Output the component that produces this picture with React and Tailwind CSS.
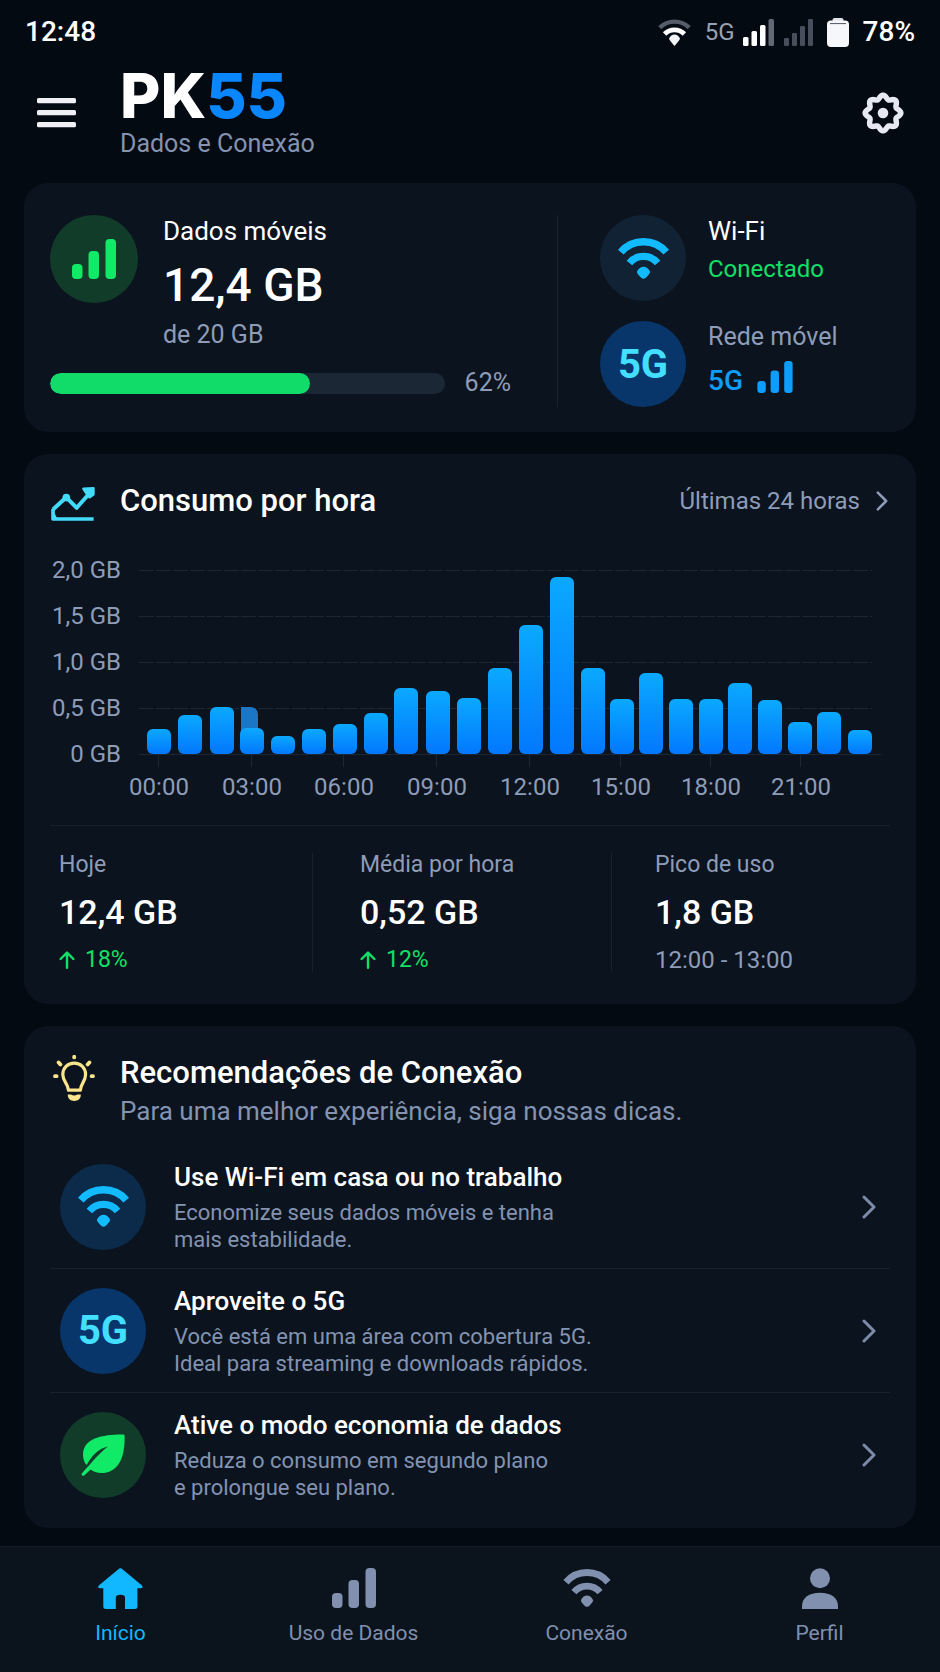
import { useState } from 'react';

const bars = [
  { x: 97, h: 25 },
  { x: 128, h: 39 },
  { x: 160, h: 47 },
  { x: 190, h: 26 },
  { x: 221, h: 18 },
  { x: 252, h: 25 },
  { x: 283, h: 30 },
  { x: 314, h: 41 },
  { x: 344, h: 66 },
  { x: 376, h: 63 },
  { x: 407, h: 56 },
  { x: 438, h: 86 },
  { x: 469, h: 129 },
  { x: 500, h: 177 },
  { x: 531, h: 86 },
  { x: 560, h: 55 },
  { x: 589, h: 81 },
  { x: 619, h: 55 },
  { x: 649, h: 55 },
  { x: 678, h: 71 },
  { x: 708, h: 54 },
  { x: 738, h: 32 },
  { x: 767, h: 42 },
  { x: 798, h: 24 },
];

const yTicks = [
  { label: '2,0 GB', y: 25 },
  { label: '1,5 GB', y: 71 },
  { label: '1,0 GB', y: 117 },
  { label: '0,5 GB', y: 163 },
  { label: '0 GB', y: 209 },
];

const xTicks = [
  { label: '00:00', x: 109 },
  { label: '03:00', x: 202 },
  { label: '06:00', x: 294 },
  { label: '09:00', x: 387 },
  { label: '12:00', x: 480 },
  { label: '15:00', x: 571 },
  { label: '18:00', x: 661 },
  { label: '21:00', x: 751 },
];

// closed wavy ring with 8 lobes
const gearPath =
  Array.from({ length: 96 }, (_, i) => {
    const a = (i / 96) * Math.PI * 2;
    const r = 16 + 1.9 * Math.cos(8 * a);
    const x = (21 + r * Math.cos(a)).toFixed(2);
    const y = (21 + r * Math.sin(a)).toFixed(2);
    return `${i === 0 ? 'M' : 'L'}${x} ${y}`;
  }).join('') + 'Z';

function WifiIcon({ className }) {
  return (
    <svg viewBox="0 0 51 41" className={className} fill="none" stroke="currentColor" aria-hidden="true">
      <path d="M2.8 14.2A30 30 0 0 1 48.2 14.2" strokeWidth="7.4" />
      <path d="M11.4 25A18.4 18.4 0 0 1 39.6 25" strokeWidth="7.2" />
      <path
        d="M19 33.5C20.5 30.2 23 28.7 25.5 28.7S30.5 30.2 32 33.5C32.3 35 31 36.3 27.5 40.1Q25.5 41.6 23.5 40.1C20 36.3 18.7 35 19 33.5Z"
        fill="currentColor"
        stroke="none"
      />
    </svg>
  );
}

function SignalIcon({ className }) {
  return (
    <svg viewBox="0 0 44 40" className={className} fill="currentColor" aria-hidden="true">
      <rect x="0" y="25" width="10.5" height="15" rx="4" />
      <rect x="16.5" y="12" width="10.5" height="28" rx="4" />
      <rect x="33.5" y="0" width="10.5" height="40" rx="4" />
    </svg>
  );
}

function LeafIcon({ className }) {
  return (
    <svg viewBox="0 0 44 42" className={className} fill="currentColor" aria-hidden="true">
      <path d="M42.6 .5C28 .6 2 1.5 2 21C2 25 3.5 29 5.7 31C11 21 18 14.5 27 12.5C19 18.5 12 27 .8 39.6C0 41 1.8 42.6 3.2 41.4L9.6 35.6C12.6 38 16 39 20 39C37 39 44.2 24 43.6 1.6Q43.5 .5 42.6 .5Z" />
    </svg>
  );
}

function ChevronIcon({ className }) {
  return (
    <svg viewBox="0 0 14 24" className={className} fill="none" stroke="currentColor" strokeWidth="3" strokeLinecap="round" strokeLinejoin="round" aria-hidden="true">
      <path d="M2 2L12 12L2 22" />
    </svg>
  );
}

function HomeIcon({ className }) {
  return (
    <svg viewBox="0 0 45 41" className={className} fill="currentColor" aria-hidden="true">
      <path d="M21.3 .6Q22.4 -.3 23.5 .6L44 17.6Q45.4 19.9 43 20.3H39.4V38.5Q39.4 41 36.8 41H27V29.5Q27 26.7 22.4 26.7T17.8 29.5V41H8Q5.3 41 5.3 38.5V20.3H1.8Q-.8 19.9 .8 17.6Z" />
    </svg>
  );
}

function UserIcon({ className }) {
  return (
    <svg viewBox="0 0 36 41" className={className} fill="currentColor" aria-hidden="true">
      <circle cx="18" cy="10.2" r="10" />
      <path d="M0 41V38.5C0 29.5 7 24.8 18 24.8S36 29.5 36 38.5V41Z" />
    </svg>
  );
}

function TrendIcon({ className }) {
  return (
    <svg viewBox="0 0 44 34" className={className} fill="none" stroke="currentColor" strokeLinejoin="round" aria-hidden="true">
      <path d="M2 22.5L15.3 10.3L25.7 20.8L37 8" strokeWidth="4" />
      <path d="M2 22V32H42.6" strokeWidth="3.6" />
      <path d="M3 25L6.5 32H3Z" fill="currentColor" stroke="none" />
      <path d="M32.5 1.8L42.4 1.4L42.4 7.5L38.6 10.2L36 7Z" fill="currentColor" strokeWidth="2.6" />
      <circle cx="15.3" cy="10.6" r="3.8" fill="currentColor" stroke="none" />
    </svg>
  );
}

function BulbIcon({ className }) {
  return (
    <svg viewBox="0 0 42 46" className={className} fill="none" stroke="currentColor" strokeLinecap="round" strokeLinejoin="round" aria-hidden="true">
      <path d="M15.4 35.2C15.4 29 9.8 26.6 9.8 19.6C9.8 13 14.6 8.2 21.2 8.2S32.6 13 32.6 19.6C32.6 26.6 27.4 29 27.4 35.2Z" strokeWidth="3.2" />
      <path d="M14.8 39.6H18Q21.2 41.6 24.4 39.6H27.8C28 43.6 25.2 46 21.3 46S14.6 43.6 14.8 39.6Z" fill="currentColor" stroke="none" />
      <path d="M21.2 1.8V2.4M2 21.2H3.6M38.6 21.2H40M5.6 7.4L7.4 9.4M36.4 7.4L34.6 9.4" strokeWidth="3.8" />
    </svg>
  );
}

function ArrowUpIcon({ className }) {
  return (
    <svg viewBox="0 0 16 18" className={className} fill="none" stroke="currentColor" strokeWidth="2.4" strokeLinecap="round" strokeLinejoin="round" aria-hidden="true">
      <path d="M8 16.8V1.6M1.6 8L8 1.6L14.4 8" />
    </svg>
  );
}

function StatusBar() {
  return (
    <div className="flex h-[62px] items-center justify-between px-[25px] pt-0.5 text-[28px] font-medium text-white">
      <span>12:48</span>
      <div className="flex items-center">
        <svg viewBox="0 0 33 27" className="h-[27px] w-[33px]" fill="none" aria-hidden="true">
          <path d="M1.8 8.6A21 21 0 0 1 31.2 8.6" stroke="#565d69" strokeWidth="4.4" />
          <path d="M6.6 15A14 14 0 0 1 26.4 15" stroke="#fff" strokeWidth="4.8" />
          <path d="M11 19.6Q13 15.6 16.5 15.6T22 19.6Q22 21 16.5 27Q11 21 11 19.6Z" fill="#f1f3f6" />
        </svg>
        <span className="ml-3.5 text-2xl font-normal text-[#9aa1b1]">5G</span>
        <svg viewBox="0 0 31 27" className="ml-2 h-[27px] w-[31px]" fill="#fff" aria-hidden="true">
          <rect x="0" y="18" width="5.5" height="9" rx="1.5" />
          <rect x="8.5" y="12" width="5.5" height="15" rx="1.5" />
          <rect x="17" y="6" width="5.5" height="21" rx="1.5" />
          <rect x="25.5" y="0" width="5.5" height="27" rx="1.5" fill="#636974" />
        </svg>
        <svg viewBox="0 0 29 27" className="ml-2.5 h-[27px] w-[29px]" fill="#484e5b" aria-hidden="true">
          <rect x="0" y="19" width="5" height="8" rx="1" />
          <rect x="8" y="14" width="5" height="13" rx="1" />
          <rect x="16" y="7" width="5" height="20" rx="1" />
          <rect x="24" y="0" width="5" height="27" rx="1" />
        </svg>
        <svg viewBox="0 0 22 29" className="ml-3.5 h-[29px] w-[22px]" aria-hidden="true">
          <rect x="5.5" y="0" width="11" height="6" rx="2" fill="#dfe3ea" />
          <rect x="0" y="2.5" width="22" height="26.5" rx="4" fill="#f6f7fb" />
          <path d="M3 5.6H19" stroke="#4d5563" strokeWidth="1" />
        </svg>
        <span className="ml-3.5">78%</span>
      </div>
    </div>
  );
}

function Header() {
  return (
    <header className="flex items-start px-9 pt-1.5 pb-[23px]">
      <button type="button" aria-label="Abrir menu" className="flex h-[90px] items-center">
        <svg viewBox="0 0 40 30" className="h-[30px] w-10" fill="#eef0f5" aria-hidden="true">
          <rect x="1" y="0" width="39" height="5.2" rx="1.5" />
          <rect x="1" y="12" width="39" height="5.2" rx="1.5" />
          <rect x="1" y="24" width="39" height="5.2" rx="1.5" />
        </svg>
      </button>
      <div className="ml-11 flex-1">
        <h1 className="font-[Inter,sans-serif] text-[62px] leading-[56px] font-extrabold text-white">
          PK<span className="text-[#0a86ff]">55</span>
        </h1>
        <p className="mt-1 text-[25px] leading-8 text-[#8393b1]">Dados e Conexão</p>
      </div>
      <button type="button" aria-label="Configurações" className="flex h-[90px] items-center">
        <svg viewBox="0 0 42 42" className="size-[42px]" aria-hidden="true">
          <path d={gearPath} fill="none" stroke="#e6e9f2" strokeWidth="5.4" strokeLinejoin="round" />
          <circle cx="21" cy="21" r="5.3" fill="#e6e9f2" />
        </svg>
      </button>
    </header>
  );
}

function UsageCard() {
  const [percent] = useState(62);

  return (
    <section className="grid grid-cols-[1fr_333px] rounded-3xl bg-[#0b131e] px-[26px] pt-8 pb-[25px]">
      <div className="pr-[46px]">
        <div className="flex gap-[25px]">
          <div className="flex size-[88px] shrink-0 items-center justify-center rounded-full bg-[#113c29] text-[#10ea67]">
            <SignalIcon className="h-10 w-11" />
          </div>
          <div>
            <h2 className="text-[26px] leading-8 text-white">Dados móveis</h2>
            <p className="mt-2.5 text-[46px] leading-[56px] font-medium text-white">12,4 GB</p>
            <p className="mt-1.5 text-[25px] leading-8">de 20 GB</p>
          </div>
        </div>
        <div className="mt-4 flex items-center gap-5">
          <div role="progressbar" aria-label="Dados usados" aria-valuenow={percent} aria-valuemin="0" aria-valuemax="100" className="h-[21px] flex-1 overflow-hidden rounded-full bg-[#1c2736]">
            <div className="h-full w-[66%] rounded-full bg-[#11dc69]" />
          </div>
          <span className="text-[25px] leading-8">{percent}%</span>
        </div>
      </div>
      <div className="flex flex-col gap-5 border-l border-[#1a232f] pl-[42px]">
        <div className="flex gap-[22px]">
          <div className="flex size-[86px] items-center justify-center rounded-full bg-[#102233] text-[#12bbff]">
            <WifiIcon className="h-[41px] w-[51px]" />
          </div>
          <div>
            <h2 className="text-[26px] leading-8 text-white">Wi-Fi</h2>
            <p className="mt-1.5 text-2xl leading-8 text-[#12e066]">Conectado</p>
          </div>
        </div>
        <div className="flex gap-[22px]">
          <div className="flex size-[86px] items-center justify-center rounded-full bg-[#08366a] pt-0.5 text-[40px] font-bold text-[#42dfff]">
            5G
          </div>
          <div>
            <h2 className="text-[25px] leading-8">Rede móvel</h2>
            <p className="mt-3 flex gap-3.5 text-[28px] leading-8 font-medium text-[#0f9dfb]">
              5G
              <SignalIcon className="-mt-1 h-8 w-9" />
            </p>
          </div>
        </div>
      </div>
    </section>
  );
}

function HourlyChart() {
  return (
    <svg viewBox="0 0 840 260" className="mt-6 w-full" role="img" aria-label="Consumo por hora nas últimas 24 horas">
      <defs>
        <linearGradient id="bar" x1="0" y1="0" x2="0" y2="1">
          <stop offset="0" stopColor="#0ba9ff" />
          <stop offset="1" stopColor="#0278fd" />
        </linearGradient>
      </defs>
      {yTicks.map((tick) => (
        <g key={tick.label}>
          <text x="71" y={tick.y + 8} textAnchor="end" fontSize="24" fill="#8e9cb8">
            {tick.label}
          </text>
          <path
            d={tick.y === 209 ? 'M89 209.5H831' : `M89 ${tick.y + 0.5}H822`}
            stroke="#1c2733"
            strokeDasharray={tick.y === 209 ? undefined : '15 2'}
          />
        </g>
      ))}
      {xTicks.map((tick) => (
        <g key={tick.label}>
          <path d={`M${tick.x - 0.5} 210V222`} stroke="#1c2733" />
          <text x={tick.x} y="250" textAnchor="middle" fontSize="24" fill="#8e9cb8">
            {tick.label}
          </text>
        </g>
      ))}
      <path d="M191 162H201Q208 163 208 170V190H191Z" fill="#1c76c6" />
      {bars.map((bar) => (
        <rect key={bar.x} x={bar.x} y={209 - bar.h} width="24" height={bar.h} rx="6" fill="url(#bar)" />
      ))}
    </svg>
  );
}

function ConsumptionCard() {
  return (
    <section className="rounded-3xl bg-[#0b131e] px-[26px] pt-[27px] pb-8">
      <div className="flex items-center justify-between">
        <div className="flex items-center">
          <TrendIcon className="mt-1.5 ml-px h-[34px] w-11 text-[#42dcfa]" />
          <h2 className="ml-[25px] text-[31px] leading-10 font-medium text-white">Consumo por hora</h2>
        </div>
        <button type="button" className="mr-0.5 flex items-center gap-4 text-2xl">
          Últimas 24 horas
          <ChevronIcon className="h-5 w-3" />
        </button>
      </div>
      <HourlyChart />
      <div className="mt-5 grid grid-cols-[262fr_299fr_279fr] border-t border-[#18212d] pt-[27px] text-[23px] leading-6">
        <div className="pl-[9px]">
          <h3>Hoje</h3>
          <p className="mt-[15px] text-[34px] leading-10 font-medium text-white">12,4 GB</p>
          <p className="mt-4 flex items-center gap-2.5 text-[#12e066]">
            <ArrowUpIcon className="h-[18px] w-4" />
            18%
          </p>
        </div>
        <div className="border-l border-[#18212d] pl-[47px]">
          <h3>Média por hora</h3>
          <p className="mt-[15px] text-[34px] leading-10 font-medium text-white">0,52 GB</p>
          <p className="mt-4 flex items-center gap-2.5 text-[#12e066]">
            <ArrowUpIcon className="h-[18px] w-4" />
            12%
          </p>
        </div>
        <div className="border-l border-[#18212d] pl-[43px]">
          <h3>Pico de uso</h3>
          <p className="mt-[15px] text-[34px] leading-10 font-medium text-white">1,8 GB</p>
          <p className="mt-4 text-2xl leading-6">12:00 - 13:00</p>
        </div>
      </div>
    </section>
  );
}

const tips = [
  {
    id: 1,
    title: 'Use Wi-Fi em casa ou no trabalho',
    lines: ['Economize seus dados móveis e tenha', 'mais estabilidade.'],
    badge: 'bg-[#0c2b4a] text-[#12bbff]',
    icon: <WifiIcon className="h-[41px] w-[51px]" />,
  },
  {
    id: 2,
    title: 'Aproveite o 5G',
    lines: ['Você está em uma área com cobertura 5G.', 'Ideal para streaming e downloads rápidos.'],
    badge: 'bg-[#08366a] text-[#42dfff]',
    icon: '5G',
  },
  {
    id: 3,
    title: 'Ative o modo economia de dados',
    lines: ['Reduza o consumo em segundo plano', 'e prolongue seu plano.'],
    badge: 'bg-[#113c29] text-[#10ea67]',
    icon: <LeafIcon className="h-[42px] w-11" />,
  },
];

function TipsCard() {
  return (
    <section className="rounded-3xl bg-[#0b131e] px-[26px] pt-[27px] pb-3">
      <div className="flex items-start">
        <BulbIcon className="mt-0.5 ml-[3px] h-[46px] w-[42px] text-[#fbe58c]" />
        <div className="ml-[25px]">
          <h2 className="text-[31px] leading-10 font-medium text-white">Recomendações de Conexão</h2>
          <p className="mt-0.5 text-[26px] leading-8 text-[#8393b1]">Para uma melhor experiência, siga nossas dicas.</p>
        </div>
      </div>
      <ul className="mt-[18px] divide-y divide-[#18212d]">
        {tips.map((tip) => (
          <li key={tip.id}>
            <a href="#" className="flex h-[123px] items-center pr-3.5 pl-2.5">
              <span className={`flex size-[86px] shrink-0 items-center justify-center rounded-full text-[40px] font-bold ${tip.badge}`}>
                {tip.icon}
              </span>
              <span className="ml-7 flex-1">
                <span className="block text-[26px] leading-8 font-medium text-white">{tip.title}</span>
                <span className="mt-1.5 block text-[22px] leading-[27px] text-[#8393b1]">
                  {tip.lines[0]}
                  <br />
                  {tip.lines[1]}
                </span>
              </span>
              <ChevronIcon className="h-6 w-3.5 text-[#7c8ba8]" />
            </a>
          </li>
        ))}
      </ul>
    </section>
  );
}

const navItems = [
  { id: 'inicio', label: 'Início', icon: <HomeIcon className="h-[41px] w-[45px]" /> },
  { id: 'uso', label: 'Uso de Dados', icon: <SignalIcon className="h-10 w-11" /> },
  { id: 'conexao', label: 'Conexão', icon: <WifiIcon className="h-[38px] w-12" /> },
  { id: 'perfil', label: 'Perfil', icon: <UserIcon className="h-[41px] w-9" /> },
];

function App() {
  const [active, setActive] = useState('inicio');

  return (
    <div className="min-h-screen bg-[#040a12] font-[Roboto,sans-serif] text-[#8e9cb8]">
      <StatusBar />
      <Header />
      <main className="flex flex-col gap-[22px] px-6">
        <UsageCard />
        <ConsumptionCard />
        <TipsCard />
      </main>
      <nav className="mt-[18px] grid grid-cols-4 border-t border-[#121b27] bg-[#0b131d] px-1 pt-5 pb-[27px]">
        {navItems.map((item) => (
          <button
            key={item.id}
            type="button"
            onClick={() => setActive(item.id)}
            className={`flex flex-col items-center gap-3 text-[21px] leading-6 ${
              active === item.id ? 'text-[#12b8ff]' : 'text-[#8190ae]'
            }`}
          >
            <span className="flex h-[42px] items-center">{item.icon}</span>
            {item.label}
          </button>
        ))}
      </nav>
    </div>
  );
}

export default App;
